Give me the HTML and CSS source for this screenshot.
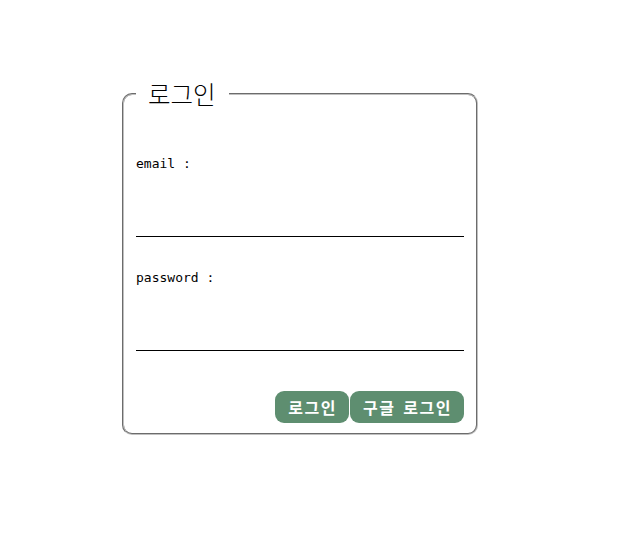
FILE: index.html
```html
<!DOCTYPE html>
<html lang="ko">
<head>
<meta charset="utf-8">
<link rel="stylesheet" href="styles.css">
</head>
<body>
<main class="page">
  <form class="login-form">
    <fieldset class="box">
      <legend class="title">로그인</legend>
      <div class="field">
        <label class="label" for="email">email :</label>
        <input class="input" id="email" type="text">
      </div>
      <div class="field">
        <label class="label" for="pw">password :</label>
        <input class="input" id="pw" type="password">
      </div>
      <div class="actions">
        <button type="button" class="btn">로그인</button>
        <button type="button" class="btn">구글 로그인</button>
      </div>
    </fieldset>
  </form>
</main>
</body>
</html>
```
FILE: styles.css
```css
html, body { margin: 0; padding: 0; background: #fff; }
.page { padding: 77px 0 0 122px; }
.login-form { width: 356px; margin: 0; }
.box {
  margin: 0;
  border: 2px groove rgb(192,192,192);
  border-radius: 10px;
  padding: 0 12px 10px 12px;
  display: flex;
  flex-direction: column;
}
.title {
  font-family: "Noto Sans CJK KR", sans-serif;
  font-size: 24.5px;
  font-weight: 300;
  line-height: 34px;
  padding: 0 13px 0 12px;
  color: #000;
}
.field { display: flex; flex-direction: column; }
.field:first-of-type { margin-top: 44px; }
.label {
  font-family: "DejaVu Sans Mono", monospace;
  font-size: 13px;
  line-height: 17px;
  color: #000;
}
.input {
  border: none;
  border-bottom: 1px solid #000;
  height: 40px;
  margin: 24px 0 32px;
  padding: 0;
  outline: none;
  background: transparent;
}
.field + .field .input { margin-bottom: 40px; }
.actions { display: flex; justify-content: flex-end; gap: 1px; }
.btn {
  font-family: "Noto Sans CJK KR", sans-serif;
  font-size: 16px;
  font-weight: 700;
  letter-spacing: 1.5px;
  word-spacing: 2px;
  color: #fff;
  background: rgb(94,142,112);
  border: none;
  border-radius: 9px;
  height: 32px;
  padding: 0 12px 0 13px;
}
```
